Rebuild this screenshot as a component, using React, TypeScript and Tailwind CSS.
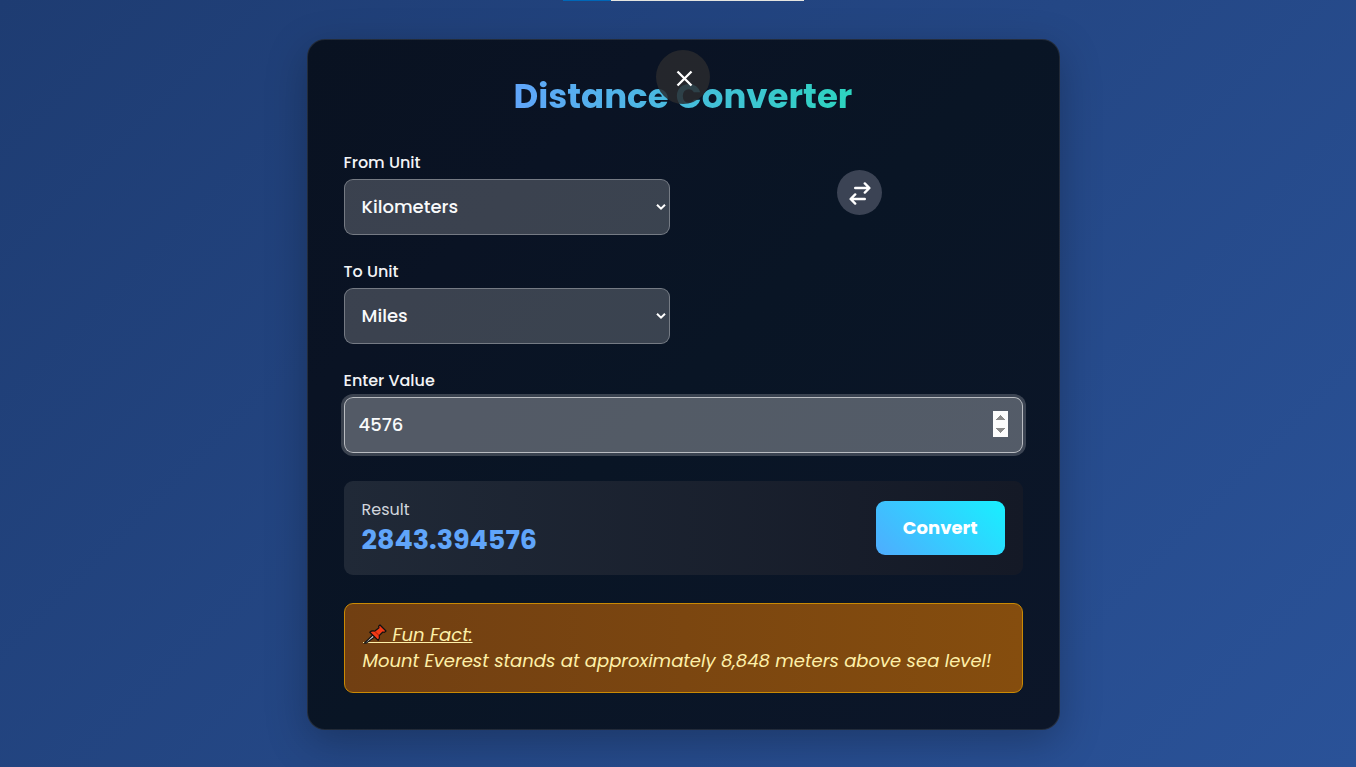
import { useState } from "react";

const METERS: Record<string, number> = {
  Kilometers: 1000,
  Miles: 1609.344,
  Meters: 1,
  Feet: 0.3048,
};

function UnitSelect({
  id,
  label,
  value,
  onChange,
}: {
  id: string;
  label: string;
  value: string;
  onChange: (unit: string) => void;
}) {
  return (
    <div>
      <label htmlFor={id} className="mb-1 block text-base leading-6 font-medium text-gray-100">
        {label}
      </label>
      <div className="relative">
        <select
          id={id}
          value={value}
          onChange={(e) => onChange(e.target.value)}
          className="h-14 w-full appearance-none rounded-[9px] border border-white/30 bg-white/20 px-[17px] text-lg font-medium text-gray-50"
        >
          {Object.keys(METERS).map((unit) => (
            <option key={unit} className="text-black">
              {unit}
            </option>
          ))}
        </select>
        <svg
          viewBox="0 0 10 7"
          className="pointer-events-none absolute top-1/2 right-1 h-[7px] w-2.5 -translate-y-1/2 text-white"
          fill="none"
          stroke="currentColor"
          strokeWidth="2"
          aria-hidden="true"
        >
          <path d="M1 1.2 5 5.2 9 1.2" />
        </svg>
      </div>
    </div>
  );
}

function Pushpin() {
  return (
    <svg viewBox="0 0 30 22" className="inline-block h-[22px] w-[30px] align-[-5px]" aria-hidden="true">
      <path d="M0 18.5H30" stroke="currentColor" strokeWidth="1" />
      <path d="M1.5 19 10 10.8l2 2L3.2 19.2Z" fill="#c9cdd2" stroke="#111" strokeWidth="1.1" />
      <path
        d="m17 1 6 6-1.6 1.4-1.6-.4-3.6 3.6c.6 1.8.2 3.4-1 4.8L6.8 8.2c1.4-1.2 3-1.5 4.8-1L16 3.8 15.6 2.2Z"
        fill="#f03a17"
        stroke="#111"
        strokeWidth="1.2"
        strokeLinejoin="round"
      />
      <path d="m11.6 7.2 4.6 4.4" stroke="#a51d0b" strokeWidth="1" />
    </svg>
  );
}

export default function App() {
  const [from, setFrom] = useState("Kilometers");
  const [to, setTo] = useState("Miles");
  const [value, setValue] = useState("4576");
  const [result, setResult] = useState("2843.394576");

  const convert = () =>
    setResult(((Number(value) * METERS[from]) / METERS[to]).toFixed(6));
  const swap = () => {
    setFrom(to);
    setTo(from);
  };

  return (
    <div className="relative flex min-h-screen items-center justify-center bg-[linear-gradient(135deg,#1e3c72,#2a5298)] pt-px pl-2.5 font-['Poppins','Inter',sans-serif]">
      <div className="absolute top-0 left-1/2 flex h-px w-[241px] translate-x-[-115px] bg-[#e5e5e0]">
        <div className="w-1/5 bg-[#0067b8]" />
      </div>

      <main className="relative w-full max-w-[753px] rounded-[18px] border border-white/10 bg-[linear-gradient(135deg,#091221,#0a1324_25%,#091525_50%,#0c1629)] p-9 shadow-[0_12px_40px_rgba(0,0,0,0.25)]">
        <button
          type="button"
          aria-label="Close"
          className="absolute top-2.5 left-1/2 flex size-[54px] -translate-x-1/2 items-center justify-center rounded-full bg-[#292a2e]/85 text-white"
        >
          <svg viewBox="0 0 20 20" className="size-5" stroke="currentColor" strokeWidth="2.3" aria-hidden="true">
            <path d="m4.5 4.5 14 14M18.5 4.5l-14 14" />
          </svg>
        </button>

        <h1 className="mx-auto mb-[35px] w-fit bg-[linear-gradient(to_right,#60a5fa,#2dd4bf)] bg-clip-text text-[34px] leading-10 font-bold text-transparent">
          Distance Converter
        </h1>

        <div className="grid grid-cols-2 gap-x-[27px] gap-y-[25px]">
          <UnitSelect id="from" label="From Unit" value={from} onChange={setFrom} />
          <div className="flex items-center justify-center">
            <button
              type="button"
              aria-label="Swap units"
              onClick={swap}
              className="flex size-[45px] items-center justify-center rounded-full bg-[#3b4354] text-white"
            >
              <svg
                viewBox="0 0 22 24"
                className="h-6 w-[22px]"
                fill="none"
                stroke="currentColor"
                strokeWidth="2.4"
                strokeLinecap="round"
                strokeLinejoin="round"
                aria-hidden="true"
              >
                <path d="M6.2 7H20M15.8 2.4 20.4 7l-4.6 4.6M15.8 18H2M6.2 13.4 1.6 18l4.6 4.6" />
              </svg>
            </button>
          </div>
          <UnitSelect id="to" label="To Unit" value={to} onChange={setTo} />
          <div className="col-span-2">
            <label htmlFor="amount" className="mb-1 block text-base leading-6 font-medium text-gray-100">
              Enter Value
            </label>
            <input
              id="amount"
              type="number"
              value={value}
              onChange={(e) => setValue(e.target.value)}
              className="h-14 w-full rounded-[9px] border border-white/60 bg-white/30 px-3.5 text-lg font-medium text-gray-50 ring-3 ring-white/20 outline-none [&::-webkit-inner-spin-button]:opacity-100"
            />
          </div>
        </div>

        <section className="mt-7 flex items-center justify-between rounded-[9px] bg-[linear-gradient(to_right,#202937,#141926)] px-[18px] py-[17px]">
          <div>
            <p className="text-base leading-6 text-gray-300">Result</p>
            <p className="text-[27px] leading-9 font-bold text-[#60a5fa]">{result}</p>
          </div>
          <button
            type="button"
            onClick={convert}
            className="h-[54px] rounded-[9px] bg-[linear-gradient(45deg,#4facfe,#18f0ff)] px-[27px] text-lg font-bold text-white"
          >
            Convert
          </button>
        </section>

        <section className="mt-7 rounded-[9px] border border-[#ca8a04] bg-[linear-gradient(to_right,#713f12,#854d0e)] p-[18px] text-lg leading-[26px] text-[#fef0a8] italic">
          <p className="underline">
            <Pushpin />
            Fun Fact:
          </p>
          <p>Mount Everest stands at approximately 8,848 meters above sea level!</p>
        </section>
      </main>
    </div>
  );
}
